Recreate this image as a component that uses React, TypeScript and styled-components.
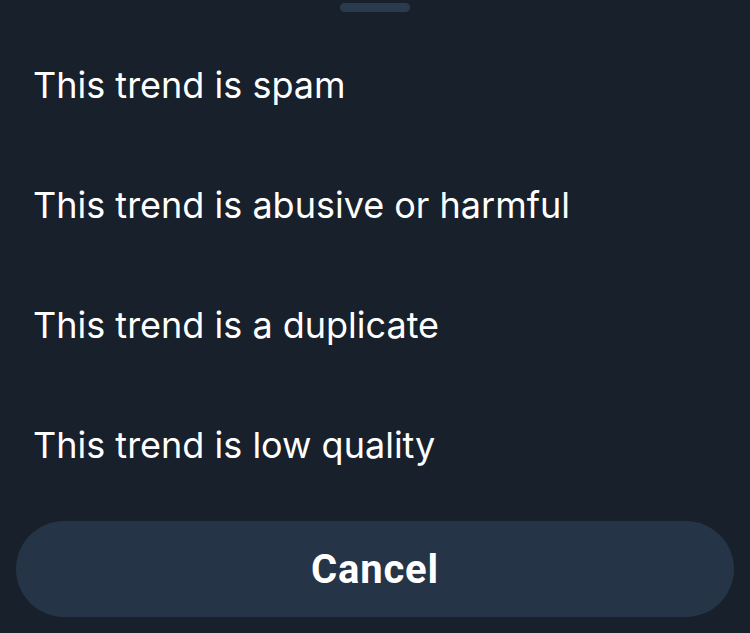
import { createGlobalStyle, styled } from "styled-components";

const GlobalStyle = createGlobalStyle`
  html, body {
    margin: 0;
    padding: 0;
    background-color: #17202b;
  }
`;

const Sheet = styled.div`
  width: 750px;
  height: 633px;
  background-color: #17202b;
  display: flex;
  flex-direction: column;
  box-sizing: border-box;
  padding: 3px 16px 16px;
  overflow: hidden;
`;

const Handle = styled.div`
  align-self: center;
  width: 70px;
  height: 9px;
  border-radius: 5px;
  background-color: #2a3a4f;
`;

const List = styled.ul`
  list-style: none;
  margin: 13px 0 0;
  padding: 0;
  display: flex;
  flex-direction: column;
`;

const Option = styled.li`
  height: 120px;
  display: flex;
  align-items: center;
  padding-left: 17px;
  color: #ffffff;
  font-family: Inter, "Noto Sans", sans-serif;
  font-size: 36px;
  font-weight: 400;
`;

const CancelButton = styled.button`
  margin-top: 16px;
  height: 96px;
  width: 100%;
  border: none;
  border-radius: 48px;
  background-color: #253446;
  color: #ffffff;
  font-family: Roboto, "Liberation Sans", sans-serif;
  font-size: 40px;
  font-weight: 700;
  letter-spacing: 0.8px;
`;

const options = [
  "This trend is spam",
  "This trend is abusive or harmful",
  "This trend is a duplicate",
  "This trend is low quality",
];

export default function App() {
  return (
    <>
      <GlobalStyle />
      <Sheet>
        <Handle />
        <List>
          {options.map((o) => (
            <Option key={o}>{o}</Option>
          ))}
        </List>
        <CancelButton>Cancel</CancelButton>
      </Sheet>
    </>
  );
}
